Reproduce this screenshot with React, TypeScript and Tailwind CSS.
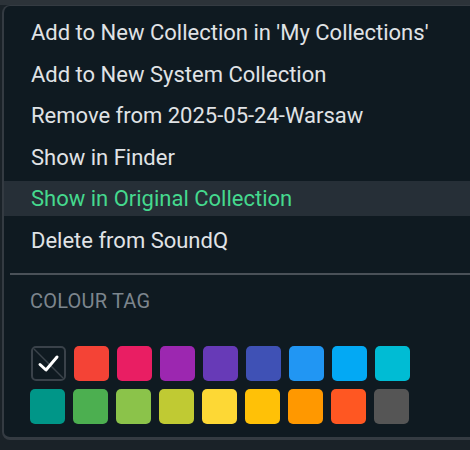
const items = [
  { label: "Add to New Collection in 'My Collections'" },
  { label: "Add to New System Collection" },
  { label: "Remove from 2025-05-24-Warsaw" },
  { label: "Show in Finder" },
  { label: "Show in Original Collection", active: true },
  { label: "Delete from SoundQ" },
];

const rowOne = ["#f44336", "#e91e63", "#9c27b0", "#673ab7", "#3f51b5", "#2196f3", "#03a9f4", "#00bcd4"];
const rowTwo = ["#009688", "#4caf50", "#8bc34a", "#c0ca33", "#fdd835", "#ffc107", "#ff9800", "#ff5722", "#555555"];

const NoColour = () => (
  <div className="relative h-[35px] w-[35px] rounded-[5px] border-2 border-[#3a424a]">
    <svg viewBox="0 0 35 35" className="absolute -left-[2px] -top-[2px] h-[35px] w-[35px]">
      <line x1="3" y1="3" x2="32" y2="32" stroke="#3a424a" strokeWidth="1.5" />
      <path d="M9 18.5 L15 24 L26 11" fill="none" stroke="#ffffff" strokeWidth="3" strokeLinecap="round" strokeLinejoin="round" />
    </svg>
  </div>
);

const Swatch = ({ color }: { color: string }) => (
  <div className="h-[35px] w-[35px] rounded-[5px]" style={{ backgroundColor: color }} />
);

export default function App() {
  return (
    <div className="flex h-[450px] w-[470px] flex-col bg-[#1a2228] font-['Roboto',sans-serif]">
      <div className="h-[5px] bg-[#2c3339]" />
      <div className="ml-[2px] flex h-[435px] flex-col rounded-bl-lg rounded-tl-lg border-b-[3px] border-l-2 border-t border-[#343b42] bg-[#0f1a21] pt-[9px]">
        <div className="flex flex-col gap-[6.5px]">
          {items.map((it) => (
            <div
              key={it.label}
              className={`flex h-[35px] items-center whitespace-nowrap pl-[27px] text-[22px] ${
                it.active ? "bg-[#262f37] text-[#45d98e]" : "text-[#e0e3e6]"
              }`}
            >
              {it.label}
            </div>
          ))}
        </div>
        <div className="ml-[6px] mt-[15px] h-[2px] bg-[#4a5158]" />
        <div className="ml-[26px] mt-[14px] text-[20px] leading-[24px] tracking-[0.2px] text-[#7c858d]">COLOUR TAG</div>
        <div className="ml-[26px] mt-[33px] flex flex-col gap-[8px]">
          <div className="flex gap-[8px] pl-[1px]">
            <NoColour />
            {rowOne.map((c) => (
              <Swatch key={c} color={c} />
            ))}
          </div>
          <div className="flex gap-[8px]">
            {rowTwo.map((c) => (
              <Swatch key={c} color={c} />
            ))}
          </div>
        </div>
      </div>
    </div>
  );
}
